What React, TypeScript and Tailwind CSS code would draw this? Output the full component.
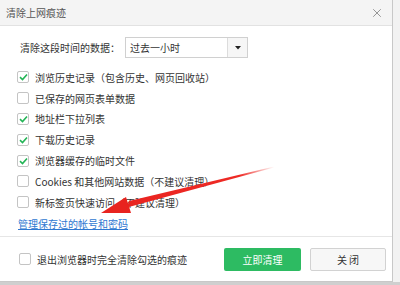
import { X } from "lucide-react";

const items = [
  { label: "浏览历史记录（包含历史、网页回收站）", checked: true },
  { label: "已保存的网页表单数据", checked: false },
  { label: "地址栏下拉列表", checked: true },
  { label: "下载历史记录", checked: true },
  { label: "浏览器缓存的临时文件", checked: true },
  { label: "Cookies 和其他网站数据（不建议清理）", checked: false },
  { label: "新标签页快速访问（不建议清理）", checked: false },
];

function Box({ checked }: { checked: boolean }) {
  return (
    <span className="w-[12px] h-[12px] shrink-0 rounded-[2px] border border-[#c4c4c4] bg-white flex items-center justify-center">
      {checked && (
        <svg width="9" height="8" viewBox="0 0 9 8">
          <path d="M1 4.2 L3.5 6.5 L8 1.5" fill="none" stroke="#22b455" strokeWidth="1.6" />
        </svg>
      )}
    </span>
  );
}

export default function App() {
  return (
    <div
      className="w-[400px] h-[285px] bg-[#cfcfcf] relative overflow-hidden text-[10px] text-[#333]"
      style={{ fontFamily: '"Noto Sans CJK SC", "Noto Sans", sans-serif' }}
    >
      <div className="w-[400px] h-[282px] bg-[#f2f2f2] flex">
        {/* Dialog */}
        <div className="w-[393px] h-[282px] bg-white border-r border-b border-[#c8c8c8] flex flex-col">
          {/* Title bar */}
          <div className="h-[26px] shrink-0 bg-[#f4f4f4] border-b border-[#e2e2e2] flex items-center pl-[6px] pr-[8px]">
            <span className="text-[#555]">清除上网痕迹</span>
            <X className="ml-auto w-[14px] h-[14px] text-[#777]" strokeWidth={1.3} />
          </div>

          {/* Body */}
          <div className="flex-1 pt-[11px]">
            <div className="flex items-center pl-[20px] h-[21px]">
              <span className="w-[105px]">清除这段时间的数据：</span>
              <div className="w-[123px] h-[21px] border border-[#d0d0d0] flex items-stretch">
                <span className="flex-1 pl-[4px] flex items-center">过去一小时</span>
                <span className="w-[20px] bg-[#f6f6f6] border-l border-[#dcdcdc] flex items-center justify-center">
                  <svg width="6" height="4" viewBox="0 0 6 4">
                    <path d="M0 0 H6 L3 3.5 Z" fill="#222" />
                  </svg>
                </span>
              </div>
            </div>

            <div className="mt-[9px] flex flex-col pl-[17px]">
              {items.map((it) => (
                <div key={it.label} className="h-[20.8px] flex items-center gap-[6px]">
                  <Box checked={it.checked} />
                  <span>{it.label}</span>
                </div>
              ))}
              <div className="h-[21px] flex items-center pl-[1px]">
                <span className="text-[#2f78d1] underline">管理保存过的帐号和密码</span>
              </div>
            </div>
          </div>

          {/* Footer */}
          <div className="h-[45px] shrink-0 border-t border-[#e6e6e6] flex items-center pl-[19px] pr-[6px]">
            <Box checked={false} />
            <span className="ml-[6px]">退出浏览器时完全清除勾选的痕迹</span>
            <button className="ml-auto w-[77px] h-[23px] rounded-[2px] bg-[#2dbb62] text-white">
              立即清理
            </button>
            <button className="ml-[9px] w-[76px] h-[23px] rounded-[2px] bg-[#f7f7f7] border border-[#d2d2d2] text-[#333]">
              关 闭
            </button>
          </div>
        </div>
      </div>

      {/* Red annotation arrow */}
      <svg className="absolute left-0 top-0 pointer-events-none" width="400" height="285">
        <defs>
          <linearGradient id="fade" x1="101" y1="213" x2="274" y2="166" gradientUnits="userSpaceOnUse">
            <stop offset="0" stopColor="#e8231f" />
            <stop offset="0.8" stopColor="#ee2a25" />
            <stop offset="1" stopColor="#ee2a25" stopOpacity="0" />
          </linearGradient>
        </defs>
        <polygon points="127,207.5 129,201 274,166.5 274,167.5" fill="url(#fade)" />
        <polygon points="101,213 126,197 131,213" fill="#e8231f" />
      </svg>
    </div>
  );
}
